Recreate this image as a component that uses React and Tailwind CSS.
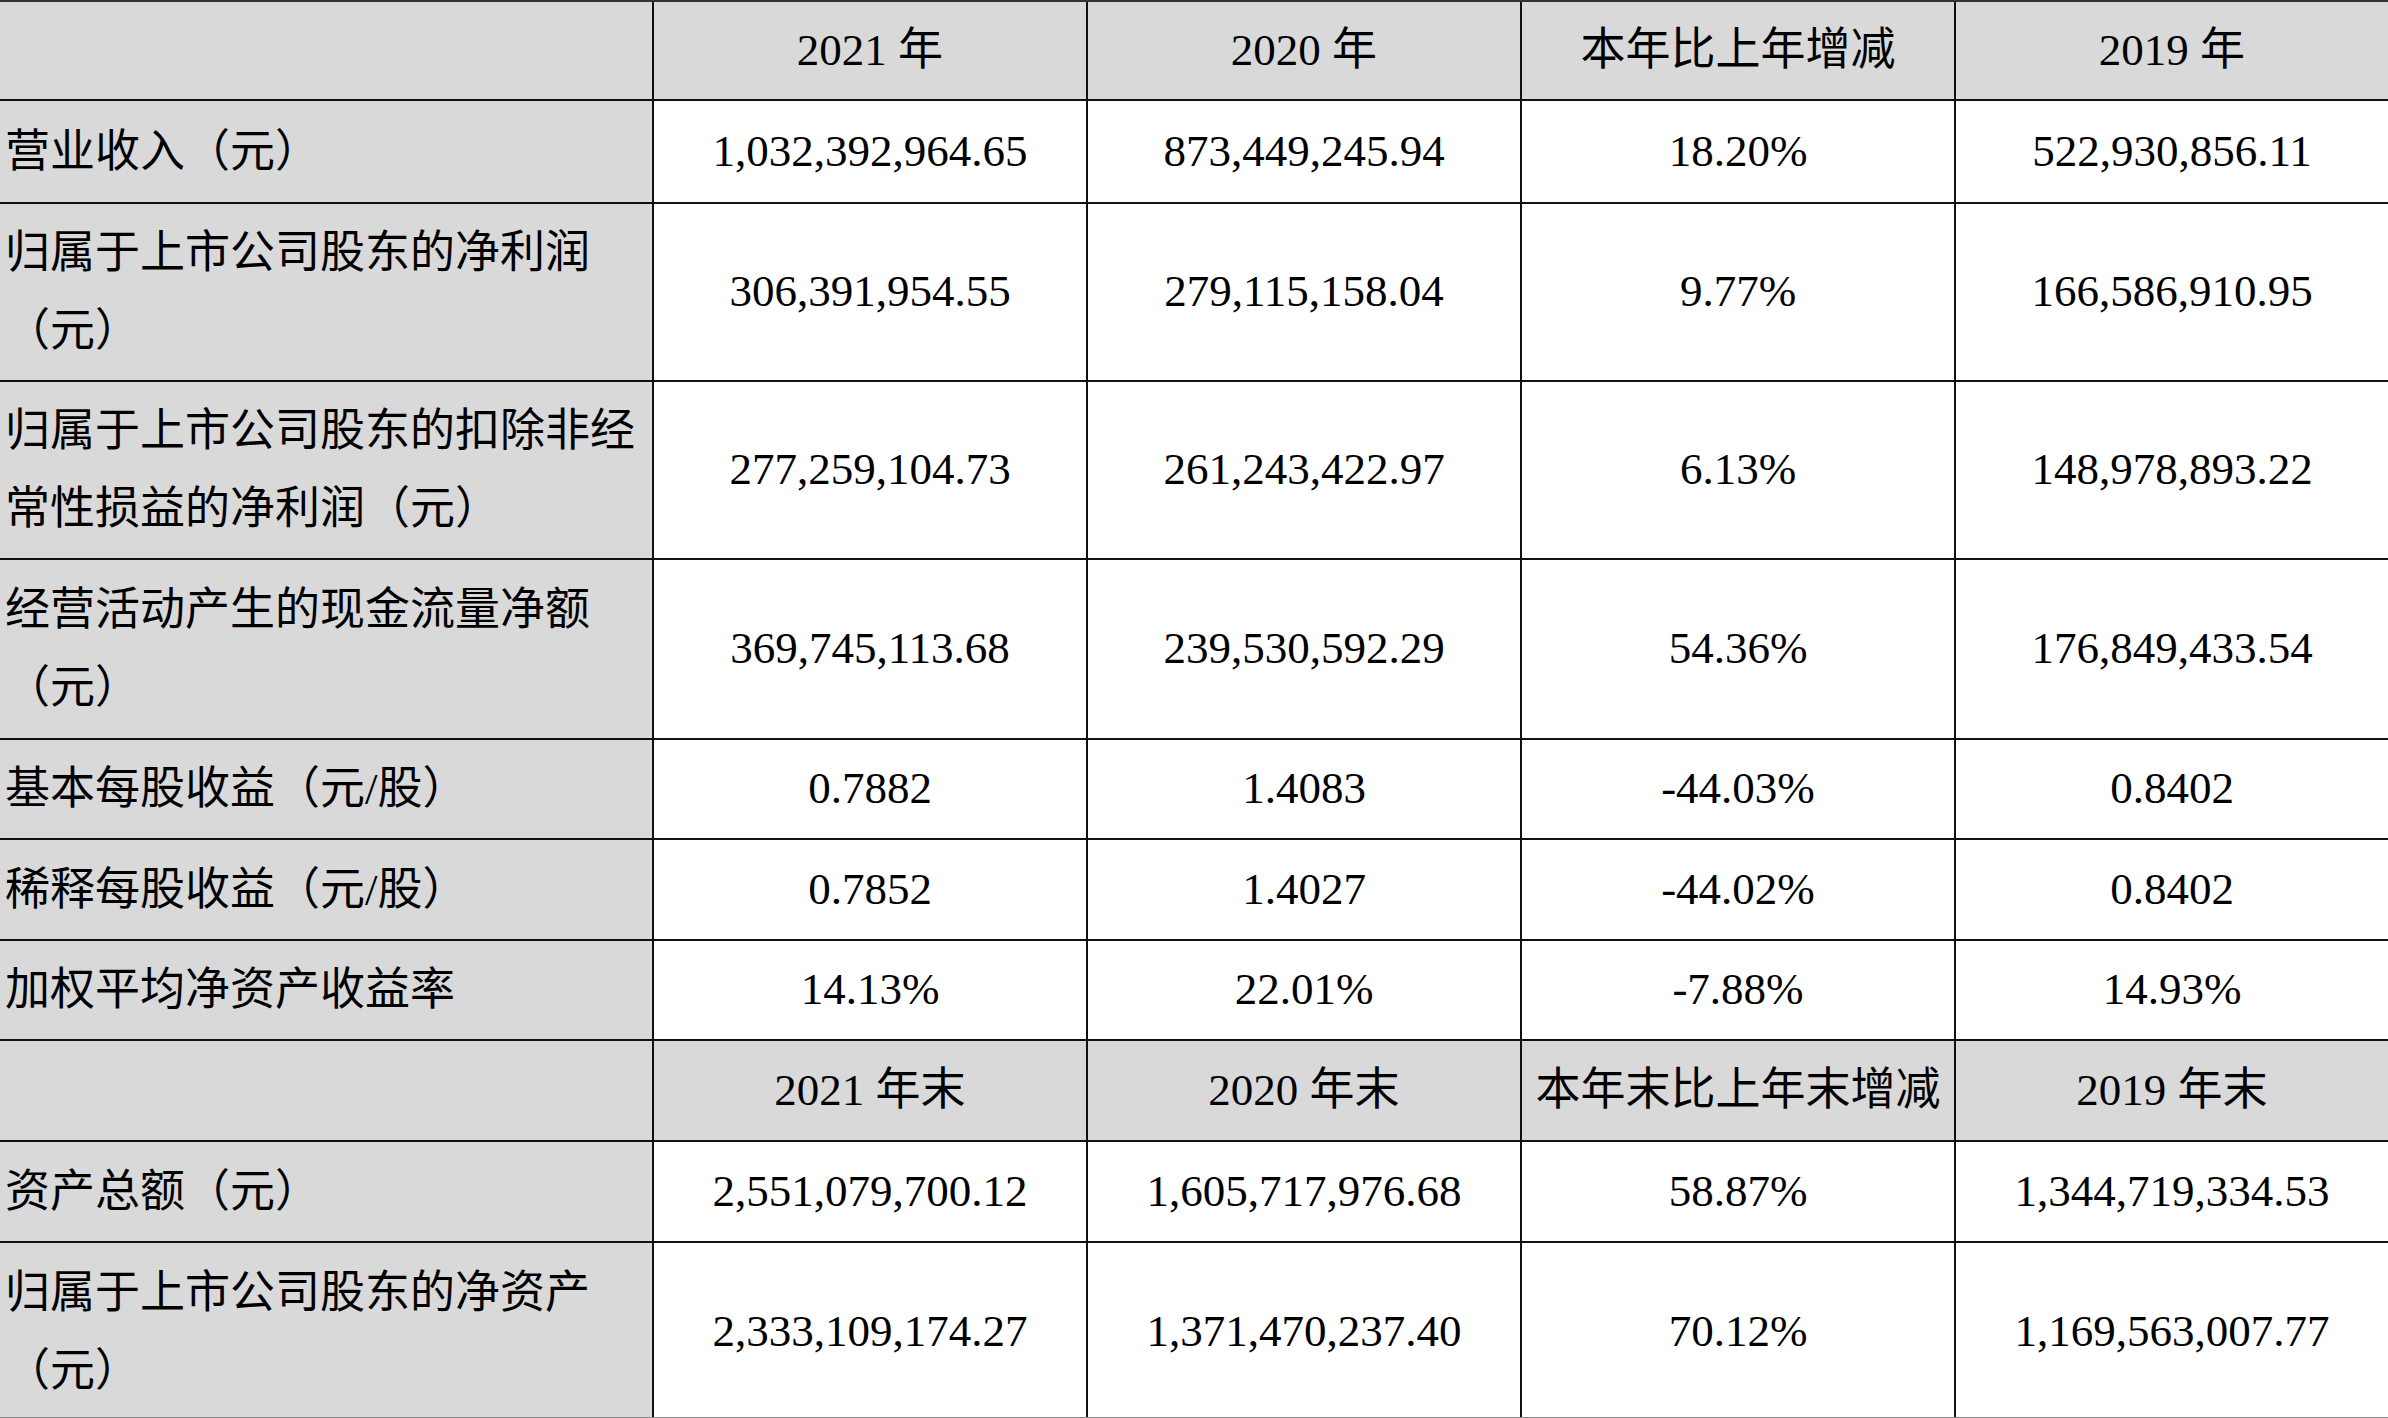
const rows = [
  { type: 'head', h: 'h-[98px]', cells: ['', '2021 年', '2020 年', '本年比上年增减', '2019 年'] },
  { h: 'h-[103px]', label: ['营业收入（元）'], cells: ['1,032,392,964.65', '873,449,245.94', '18.20%', '522,930,856.11'] },
  { h: 'h-[178px]', label: ['归属于上市公司股东的净利润', '（元）'], cells: ['306,391,954.55', '279,115,158.04', '9.77%', '166,586,910.95'] },
  { h: 'h-[178px]', label: ['归属于上市公司股东的扣除非经', '常性损益的净利润（元）'], cells: ['277,259,104.73', '261,243,422.97', '6.13%', '148,978,893.22'] },
  { h: 'h-[180px]', label: ['经营活动产生的现金流量净额', '（元）'], cells: ['369,745,113.68', '239,530,592.29', '54.36%', '176,849,433.54'] },
  { h: 'h-[100px]', label: ['基本每股收益（元/股）'], cells: ['0.7882', '1.4083', '-44.03%', '0.8402'] },
  { h: 'h-[101px]', label: ['稀释每股收益（元/股）'], cells: ['0.7852', '1.4027', '-44.02%', '0.8402'] },
  { h: 'h-[100px]', label: ['加权平均净资产收益率'], cells: ['14.13%', '22.01%', '-7.88%', '14.93%'] },
  { type: 'head', h: 'h-[101px]', cells: ['', '2021 年末', '2020 年末', '本年末比上年末增减', '2019 年末'] },
  { h: 'h-[101px]', label: ['资产总额（元）'], cells: ['2,551,079,700.12', '1,605,717,976.68', '58.87%', '1,344,719,334.53'] },
  { h: 'h-[178px]', label: ['归属于上市公司股东的净资产', '（元）'], cells: ['2,333,109,174.27', '1,371,470,237.40', '70.12%', '1,169,563,007.77'] },
];

const font = { fontFamily: '"Liberation Serif", "Noto Sans CJK SC", serif' };

export default function App() {
  return (
    <div className="w-[2388px] h-[1418px] bg-white overflow-hidden border-t-2 border-[#333] border-b border-b-[#888]" style={font}>
      <table className="w-full border-collapse table-fixed text-[45px] text-black">
        <colgroup>
          <col className="w-[653px]" />
          <col className="w-[434px]" />
          <col className="w-[434px]" />
          <col className="w-[434px]" />
          <col className="w-[433px]" />
        </colgroup>
        <tbody>
          {rows.map((r, i) => (
            <tr key={i} className={r.h}>
              <td className={`bg-[#d9d9d9] pl-[5px] pr-0 align-middle text-left leading-[78px] whitespace-nowrap ${i < rows.length - 1 ? 'border-b-2 border-b-[#111]' : ''}`}>
                {r.type === 'head' ? '' : r.label.map((l, j) => <div key={j}>{l}</div>)}
              </td>
              {(r.type === 'head' ? r.cells.slice(1) : r.cells).map((c, j) => (
                <td
                  key={j}
                  className={`border-l-2 border-l-[#111] text-center align-middle whitespace-nowrap px-0 ${r.type === 'head' ? 'bg-[#d9d9d9]' : 'bg-white'} ${i < rows.length - 1 ? 'border-b-2 border-b-[#111]' : ''}`}
                >
                  {c}
                </td>
              ))}
            </tr>
          ))}
        </tbody>
      </table>
    </div>
  );
}
